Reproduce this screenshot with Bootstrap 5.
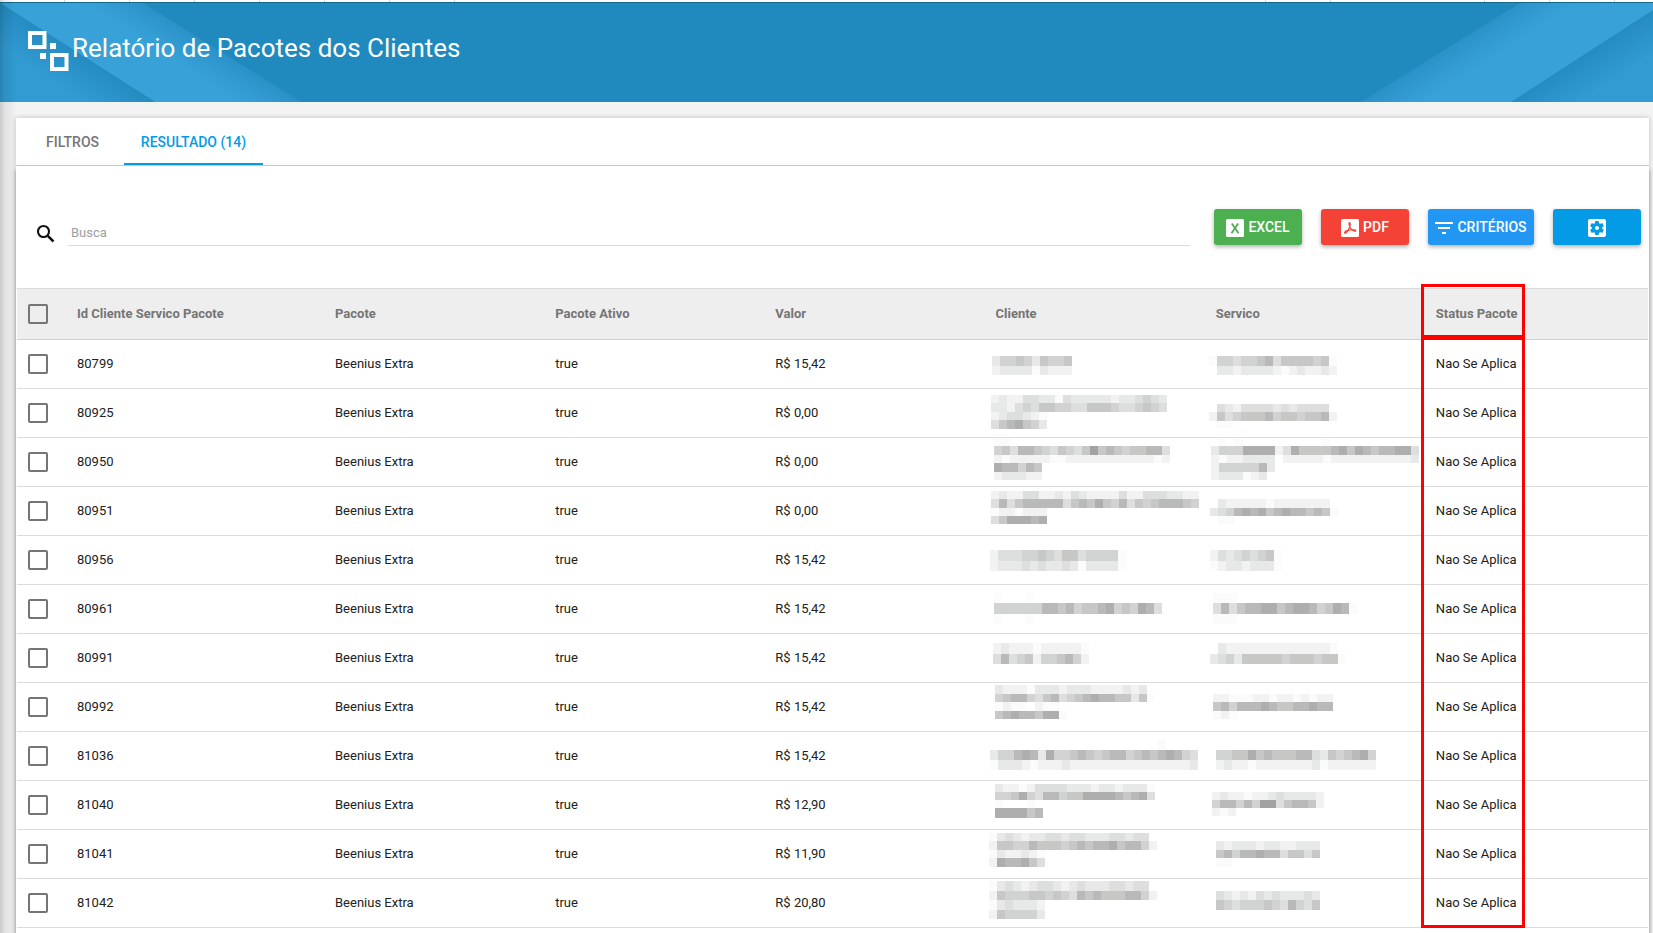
<!DOCTYPE html>
<html lang="pt-BR">
<head>
<meta charset="utf-8">
<meta name="viewport" content="width=device-width, initial-scale=1">
<title>Relatório de Pacotes dos Clientes</title>
<link href="https://cdn.jsdelivr.net/npm/bootstrap@5.3.0/dist/css/bootstrap.min.css" rel="stylesheet">
<style>
  body { font-family: Roboto, sans-serif; font-size: 13px; line-height: 20px; color: #212121; background: #f3f3f3; overflow-x: hidden; scrollbar-width: none; }
  .side-shade { width: 16px; background: linear-gradient(90deg, rgba(0,0,0,.17), rgba(0,0,0,.07) 5px, rgba(0,0,0,.04) 11px, rgba(0,0,0,0)); pointer-events: none; }
  .top-strip { height: 2px; background: #fff; }
  .ticks { background: repeating-linear-gradient(90deg, transparent 0 64px, #d0d3d6 64px 65px); }
  .ticks-start { width: 456px; } .ticks-mid { width: 131px; margin-right: 88px; } .ticks-end { width: 233px; }
  .page-head { height: 100px; background: #2089be; border-top: 1px solid #14688f; padding: 0 28px; }
  .page-head h1 { font-size: 26px; line-height: 32px; font-weight: 400; }
  .head-content { padding-top: 26px; gap: 3px; }
  .head-content h1 { padding-top: 3px; }
  .sheet { margin: 16px 4px 0 16px; }
  .tab-bar { height: 48px; background: #fff; border-bottom: 1px solid #d0d0d0; box-shadow: 0 0 5px rgba(0,0,0,.22); padding: 0 5px; }
  .tab-bar .nav-link { font-size: 14px; font-weight: 500; line-height: 20px; color: #757575; border: 0; border-bottom: 2px solid transparent; border-radius: 0; padding: 14px 16px 11px; height: 47px; min-width: 103px; text-align: center; }
  .tab-bar .nav-link.active { color: #039be5; border-color: #039be5; background: none; min-width: 139px; }
  .result { background: #fff; min-height: 780px; box-shadow: 0 3px 5px rgba(0,0,0,.5); }
  .tools { padding: 43px 8px 43px 17px; height: 122px; }
  .find-icon { margin: 12px 8px 0 0; }
  .find-input { border: 0; border-bottom: 1px solid #dcdcdc; border-radius: 0; font-size: 13px; line-height: 20px; padding: 13px 3px 3px; height: 37px; box-shadow: none; background: none; }
  .find-input::placeholder { color: #9e9e9e; }
  .actions { margin-left: 24px; gap: 19px; }
  .act { min-width: 88px; height: 36px; border: 0; border-radius: 3px; padding: 0 6px; font-size: 14px; font-weight: 500; line-height: 20px; color: #fff; gap: 4px; box-shadow: 0 2px 4px rgba(0,0,0,.3); display: inline-flex; align-items: center; justify-content: center; }
  .act svg { margin-top: 2px; }
  .act-excel { background: #4caf50; } .act-pdf { background: #f44336; } .act-crit { background: #2196f3; min-width: 106px; } .act-conf { background: #039be5; }
  .grid { table-layout: fixed; border-collapse: separate; border-spacing: 0; margin: 0 1px; width: calc(100% - 2px); }
  .grid th, .grid td { padding: 0 10px; height: 49px; vertical-align: middle; border-bottom: 1px solid #dcdcdc; text-align: left; white-space: nowrap; }
  .grid th { height: 52px; background: #eee; color: #757575; font-weight: 700; border-top: 1px solid #dcdcdc; border-bottom-color: #d0d0d0; }
  .grid .hidden-data { padding: 0; }
  .col-check { width: 50px; } .col-id { width: 258px; } .col-mid { width: 13.5%; }
  .tick { appearance: none; display: block; width: 20px; height: 20px; margin: 0 0 0 1px; border: 2px solid #757575; border-radius: 2px; background: transparent; }
  .tick:checked { background: #039be5; border-color: #039be5; }
  .outline { left: -5px; width: 104px; border: 3px solid #f00; pointer-events: none; z-index: 2; }
  .outline-head { top: -5px; height: 54px; }
  .outline-body { top: -3px; height: 591px; }
</style>
</head>
<body>
<div class="side-shade position-absolute top-0 start-0 vh-100 z-3"></div>
<div class="top-strip d-flex"><span class="ticks ticks-start me-auto"></span><span class="ticks ticks-mid"></span><span class="ticks ticks-end"></span></div>
<header class="page-head position-relative">
  <svg class="position-absolute top-0 start-0" width="310" height="99" aria-hidden="true">
    <defs>
      <linearGradient id="bandL" gradientUnits="userSpaceOnUse" x1="222" y1="50" x2="204" y2="78"><stop offset="0" stop-color="#2b92c8"/><stop offset="1" stop-color="#38a2d8"/></linearGradient>
      <linearGradient id="footL" gradientUnits="userSpaceOnUse" x1="77" y1="50" x2="57" y2="81"><stop offset="0" stop-color="#258cc2"/><stop offset="1" stop-color="#319bd2"/></linearGradient>
    </defs>
    <path d="M0 0H143L301 99H155Z" fill="url(#bandL)"/>
    <path d="M0 0L155 99H0Z" fill="url(#footL)"/>
  </svg>
  <svg class="position-absolute top-0 end-0" width="293" height="99" aria-hidden="true">
    <defs>
      <linearGradient id="bandR" gradientUnits="userSpaceOnUse" x1="80" y1="50" x2="98" y2="78"><stop offset="0" stop-color="#2b92c8"/><stop offset="1" stop-color="#38a2d8"/></linearGradient>
      <linearGradient id="footR" gradientUnits="userSpaceOnUse" x1="227" y1="50" x2="247" y2="81"><stop offset="0" stop-color="#258cc2"/><stop offset="1" stop-color="#319bd2"/></linearGradient>
    </defs>
    <path d="M160 0H293V99H1Z" fill="url(#bandR)"/>
    <path d="M293 7V99H151Z" fill="url(#footR)"/>
  </svg>
  <div class="head-content position-relative d-flex align-items-start text-white">
    <svg width="41" height="44" viewBox="0 0 41 44" aria-hidden="true"><g fill="none" stroke="#fff" stroke-width="4"><path d="M2 4H16.500V18H2Z"/><path d="M24 26H38.500V40H24Z"/></g><path d="M22 14h6v6h-6zM12 24h6v6h-6z" fill="#fff"/></svg>
    <h1 class="m-0">Relatório de Pacotes dos Clientes</h1>
  </div>
</header>
<main class="sheet">
  <nav class="tab-bar nav nav-tabs">
    <a class="nav-link" href="#filtros">FILTROS</a>
    <a class="nav-link active" href="#resultado" aria-current="page">RESULTADO (14)</a>
  </nav>
  <section class="result" id="resultado">
    <div class="tools d-flex align-items-start">
      <label for="busca" class="find-icon"><svg class="d-block" width="27" height="27" viewBox="0 0 27 27" fill="none" stroke="#111" role="img" aria-label="Busca"><circle cx="10.500" cy="10.500" r="5.500" stroke-width="2.100"/><path d="M14.800 14.800L20.500 20.500" stroke-width="2.500"/></svg></label>
      <input id="busca" class="find-input form-control flex-grow-1" type="text" placeholder="Busca">
      <div class="actions d-flex">
        <button type="button" class="act act-excel"><svg width="18" height="18" viewBox="0 0 18 18" aria-hidden="true"><rect width="18" height="18" rx="1.500" fill="#fff"/><path d="M5.800 4.500L12.500 14.200M12.200 4.500L5.500 14.200" stroke="#4caf50" stroke-width="1.800"/></svg>EXCEL</button>
        <button type="button" class="act act-pdf"><svg width="18" height="18" viewBox="0 0 18 18" aria-hidden="true"><rect width="18" height="18" rx="1.500" fill="#fff"/><path d="M8.500 3.500C7.500 3.500 8.200 6.500 9 8.200C10.200 10.600 13 12.600 14.500 12.200C15.800 11 12 10.500 9.500 10.900C6.500 11.300 3.500 12.700 3.500 14C5 15.200 7.500 11 8.700 8C9.400 6 9.600 3.500 8.500 3.500Z" fill="none" stroke="#f44336" stroke-width="1.200"/></svg>PDF</button>
        <button type="button" class="act act-crit"><svg width="18" height="18" viewBox="0 0 18 18" fill="#fff" aria-hidden="true"><path d="M0 3h18v2H0zM3 8h12v2H3zM7 13h4v2H7z"/></svg>CRITÉRIOS</button>
        <button type="button" class="act act-conf" aria-label="Configurações"><svg width="18" height="18" viewBox="3 3 18 18" fill="#fff" aria-hidden="true"><path d="M12 10c-1.100 0-2 .9-2 2s.9 2 2 2 2-.9 2-2-.9-2-2-2zm7-7H5c-1.110 0-2 .9-2 2v14c0 1.100.89 2 2 2h14c1.110 0 2-.9 2-2V5c0-1.100-.89-2-2-2zm-1.750 9c0 .23-.02.46-.05.68l1.480 1.160c.13.11.17.3.08.45l-1.400 2.420c-.09.15-.27.21-.43.15l-1.740-.7c-.36.28-.76.51-1.180.69l-.26 1.850c-.03.17-.18.3-.35.3h-2.800c-.17 0-.32-.13-.35-.29l-.26-1.850c-.43-.18-.82-.41-1.180-.69l-1.740.7c-.16.06-.34 0-.43-.15l-1.400-2.420c-.09-.15-.05-.34.08-.45l1.480-1.160c-.03-.23-.05-.46-.05-.69s.02-.46.05-.68l-1.480-1.160c-.13-.11-.17-.3-.08-.45l1.400-2.420c.09-.15.27-.21.43-.15l1.740.7c.36-.28.76-.51 1.180-.69l.26-1.850c.03-.17.18-.3.35-.3h2.800c.17 0 .32.13.35.29l.26 1.850c.43.18.82.41 1.180.69l1.740-.7c.16-.06.34 0 .43.15l1.400 2.420c.09.15.05.34-.08.45l-1.480 1.160c.03.23.05.46.05.69z"/></svg></button>
      </div>
    </div>
    <table class="grid">
      <colgroup><col class="col-check"><col class="col-id"><col class="col-mid"><col class="col-mid"><col class="col-mid"><col class="col-mid"><col class="col-mid"><col></colgroup>
      <thead>
        <tr><th><input class="tick" type="checkbox" aria-label="Selecionar todos"></th><th>Id Cliente Servico Pacote</th><th>Pacote</th><th>Pacote Ativo</th><th>Valor</th><th>Cliente</th><th>Servico</th><th class="position-relative">Status Pacote<span class="outline outline-head position-absolute"></span></th></tr>
      </thead>
      <tbody id="linhas"></tbody>
    </table>
  </section>
</main>
<script src="https://cdn.jsdelivr.net/npm/bootstrap@5.3.0/dist/js/bootstrap.bundle.min.js"></script>
<script>
  // Masked cells: [left, top, [[height, shades], ...]]; each digit is one 8px block, 0 = clear, 9 = darkest.
  const rows = [
    ['80799', '15,42', [6, 16, [[10,'3556536556'],[9,'2333313222']]], [3, 16, [[10,'1554556746666561'],[9,'0332333321232232']]]],
    ['80925', '0,00', [5, 6, [[8,'2322443314333332334543'],[9,'3324546655446665445654'],[8,'2344321'],[9,'4678653']]], [3, 15, [[8,'043244443434444'],[9,'2645666756656672'],[7,'0110']]]],
    ['80950', '0,00', [8, 0, [[8,'11'],[9,'5647765465469676566774'],[8,'2122222112222222222212'],[9,'877576'],[8,'233322']]], [5, 0, [[8,'0101000000000010'],[9,'35558888248666678687677884'],[8,'21223333022222122222222223'],[9,'25555573'],[8,'2333123']]]],
    ['80951', '0,00', [5, 4, [[8,'23224422324322224224443322'],[9,'47467777746768657465677765'],[8,'1221222'],[8,'4688878']]], [4, 12, [[9,'032222212222222'],[8,'3457878678776761'],[8,'0110']]]],
    ['80956', '15,42', [4, 14, [[11,'24445565466455551'],[10,'23334343343133331']]], [4, 14, [[11,'243454561'],[10,'123323331']]]],
    ['80961', '15,42', [8, 8, [[10,'10001'],[11,'555555776756678565874'],[10,'1000100']]], [7, 8, [[10,'111'],[11,'474677886788756871'],[10,'111']]]],
    ['80991', '15,42', [7, 9, [[11,'232221222221'],[10,'474562556752']]], [4, 9, [[11,'0322222222222221'],[10,'34536666656665661']]]],
    ['80992', '15,42', [9, 2, [[9,'3222133323332222323'],[8,'56775467456787766361'],[9,'12110211'],[8,'678776881']]], [7, 11, [[8,'221112212212122'],[9,'675777876677877'],[8,'121']]]],
    ['81036', '15,42', [4, 8, [[10,'0000000000000000000001'],[10,'35578738556765677567678754'],[10,'13332122232222222222222223']]], [10, 18, [[10,'55668676667743656785'],[10,'23221222222231222222']]]],
    ['81040', '12,90', [9, 3, [[8,'32212444433323323331'],[8,'55685477566888876784'],[8,'10001'],[10,'888867']]], [6, 11, [[8,'23221223433332'],[8,'57757599467762'],[8,'212']]]],
    ['81041', '11,90', [3, 3, [[8,'13432334434433344344'],[9,'266557666567677867752'],[8,'1322321'],[9,'2877864']]], [10, 11, [[9,'3233323322333'],[8,'6757787746646'],[9,'11']]]],
    ['81042', '20,80', [3, 2, [[10,'13432344323433344344'],[9,'265556656547676667752'],[10,'1343332'],[9,'2655553']]], [10, 12, [[9,'4323243433343'],[10,'6545556547546']]]]
  ];
  const shades = ['none','#fbfbfb','#f2f2f2','#e7e8e8','#dddede','#d1d2d2','#c7c7c6','#b9b9ba','#aeaeae','#a2a2a2'];
  function mask([left, top, bands]) {
    let y = top, out = '';
    for (const [h, cells] of bands) {
      [...cells].forEach((c, i) => { if (c !== '0') out += `<rect x="${left + i * 8}" y="${y}" width="8" height="${h}" fill="${shades[c]}"/>`; });
      y += h;
    }
    return `<td class="hidden-data"><svg class="d-block" width="218" height="48" shape-rendering="crispEdges" role="img" aria-label="Dado oculto">${out}</svg></td>`;
  }
  document.getElementById('linhas').innerHTML = rows.map(([id, valor, cliente, servico], n) =>
    `<tr><td><input class="tick" type="checkbox" aria-label="Selecionar ${id}"></td><td>${id}</td><td>Beenius Extra</td><td>true</td><td>R$ ${valor}</td>${mask(cliente)}${mask(servico)}<td class="position-relative">Nao Se Aplica${n ? '' : '<span class="outline outline-body position-absolute"></span>'}</td></tr>`).join('');
</script>
</body>
</html>
